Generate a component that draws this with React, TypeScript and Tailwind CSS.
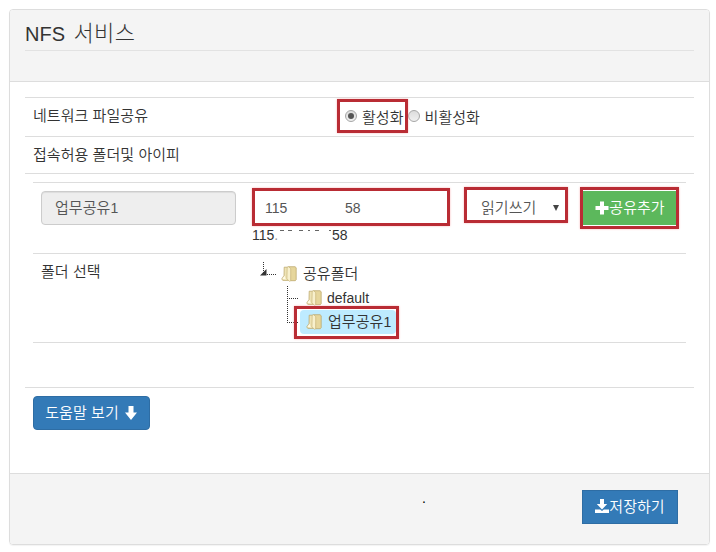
import React from 'react';

interface TextProps {
    children: React.ReactNode;
}

interface HighlightProps {
    className: string;
}

// Hangul runs a little larger than the latin text around it
const Ko: React.FC<TextProps> = ({ children }) => (
    <span className="text-[15px] leading-5 tracking-[0.05px]">{children}</span>
);

const Highlight: React.FC<HighlightProps> = ({ className }) => (
    <span className={`absolute border-[3px] border-[#b92c34] shadow-[0_0_2px_#f7b5b8] pointer-events-none ${className}`} />
);

const FolderIcon: React.FC = () => (
    <svg className="w-4 h-4 shrink-0" viewBox="0 0 16 16" fill="none">
        <path d="M3.2 1.2h4.3v13.2H2L.7 13.2 3 9.5z" fill="#eee3b5" stroke="#b7a263" strokeWidth=".7" />
        <path d="M1.3 12.8 3.6 9.8l1.2 3.6z" fill="#fffbe6" />
        <path d="M7.6.7H14l1.2 1v12l-.9 1H9.4z" fill="#e6d69c" stroke="#b7a263" strokeWidth=".7" />
        <path d="M6.2 1.2 7.6.7 9.7 2.6v12.2l-1.2.5-2.6-2.4z" fill="#f8f0cc" stroke="#c2ae70" strokeWidth=".6" />
    </svg>
);

const PlusIcon: React.FC = () => (
    <svg className="w-3.5 h-3.5 shrink-0" viewBox="0 0 14 14" fill="currentColor">
        <path d="M5 .5h4V5h4.5v4H9v4.5H5V9H.5V5H5z" />
    </svg>
);

const ArrowDownIcon: React.FC = () => (
    <svg className="w-3.5 h-3.5 shrink-0" viewBox="0 0 14 14" fill="currentColor">
        <path d="M4.5 0h5v6.5H13L7 14 1 6.5h3.5z" />
    </svg>
);

const SaveIcon: React.FC = () => (
    <svg className="w-3.5 h-3.5 -mt-0.5 shrink-0" viewBox="0 0 14 14" fill="currentColor">
        <path d="M5 0h4v5h3.2L7 10.6 1.8 5H5z" />
        <path d="M0 10.5h5.2L7 12l1.8-1.5H14V14H0z" />
    </svg>
);

const Radio: React.FC<{ checked?: boolean }> = ({ checked }) => (
    <span className="flex items-center justify-center w-3 h-3 -mt-1 rounded-full border border-[#a6a6a6] bg-linear-to-b from-[#dcdcdc] to-[#f0f0f0]">
        {checked && <span className="w-1.5 h-1.5 rounded-full bg-[#555]" />}
    </span>
);

const App: React.FC = () => {
    return (
        <div className="h-[552px] bg-white pt-[9px] pl-[9px] font-['Liberation_Sans','Noto_Sans_CJK_KR',sans-serif] text-sm leading-5 font-[350] text-[#333]">
            <div className="w-[701px] h-[536px] flex flex-col border border-[#ddd] rounded shadow-[0_1px_1px_rgba(0,0,0,0.05)] overflow-hidden">
                <header className="h-[72px] shrink-0 px-[15px] bg-[#f4f4f4] border-b border-[#ddd]">
                    <h1 className="h-[41px] pt-[9px] text-xl leading-[30px] font-light border-b border-[#e2e2e2]">
                        NFS <span className="text-[22px] ml-[3px] tracking-[0.3px]">서비스</span>
                    </h1>
                </header>

                <main className="flex-grow px-[15px] pt-[15px]">
                    <div className="h-[39px] flex border-t border-[#ddd] pl-2 pt-2">
                        <div className="w-[312px]"><Ko>네트워크 파일공유</Ko></div>
                        <div className="relative flex items-start">
                            <Highlight className="-left-2 -top-[7px] w-[71px] h-[34px]" />
                            <label className="flex items-center gap-[5px] pt-0.5">
                                <Radio checked />
                                <Ko>활성화</Ko>
                            </label>
                            <label className="flex items-center gap-[5px] pt-0.5 ml-1">
                                <Radio />
                                <Ko>비활성화</Ko>
                            </label>
                        </div>
                    </div>

                    <div className="h-[37px] border-t border-[#ddd] pl-2 pt-2">
                        <Ko>접속허용 폴더및 아이피</Ko>
                    </div>

                    <div className="h-[214px] border-t border-[#ddd] px-2 pt-2">
                        <div className="h-[71px] flex items-start border-t border-[#ddd] pl-2 pt-2">
                            <div className="w-[195px] h-[34px] flex items-center px-[13px] rounded border border-[#ccc] bg-[#eee] text-[#555] shadow-[inset_0_1px_1px_rgba(0,0,0,0.075)]">
                                <Ko>업무공유</Ko>1
                            </div>
                            <div className="ml-[17px] w-[195px]">
                                <div className="relative h-[34px] flex items-center pl-3 text-[#555]">
                                    <Highlight className="-left-px -top-[3px] w-[198px] h-[38px]" />
                                    <span className="w-20">115</span>
                                    <span>58</span>
                                </div>
                                <div className="flex -ml-px">
                                    <span className="w-[28px]">115<span className="text-[#999]">.</span></span>
                                    <span className="flex w-[52px] pt-[5px]">
                                        <span className="w-1 h-px bg-[#666]" />
                                        <span className="w-1 h-px bg-[#666] ml-1" />
                                        <span className="w-1 h-px bg-[#666] ml-[7px]" />
                                        <span className="w-0.5 h-px bg-[#666] ml-[5px]" />
                                        <span className="w-1 h-px bg-[#666] ml-[5px]" />
                                        <span className="w-0.5 h-px bg-[#666] ml-2.5" />
                                    </span>
                                    <span>58</span>
                                </div>
                            </div>
                            <div className="relative ml-[17px] w-[102px] h-[34px] flex items-center justify-between pl-4 pr-2 text-[#555]">
                                <Highlight className="-left-px -top-1 w-[104px] h-9" />
                                <Ko>읽기쓰기</Ko>
                                <svg className="w-1.5 h-1.5" viewBox="0 0 6 6" fill="#444"><path d="M0 0h6L3 6z" /></svg>
                            </div>
                            <button className="relative ml-4 w-[94px] h-[34px] flex items-center justify-center bg-[#5cb85c] text-white">
                                <Highlight className="-left-[3px] -top-1 w-[99px] h-[42px]" />
                                <PlusIcon />
                                <Ko>공유추가</Ko>
                            </button>
                        </div>

                        <div className="h-[90px] flex border-y border-[#ddd] pl-2">
                            <div className="w-[219px] pt-2"><Ko>폴더 선택</Ko></div>
                            <div className="pt-2">
                                <div className="h-6 flex items-center">
                                    <svg className="w-4 h-6 mr-[5px]" viewBox="0 0 16 24" fill="none">
                                        <path d="M3.5 0v13M7 12.5h9" stroke="#333" strokeDasharray="1 1" />
                                        <path d="M6.5 7v6.5H0z" fill="#333" />
                                    </svg>
                                    <FolderIcon />
                                    <span className="ml-[6px]"><Ko>공유폴더</Ko></span>
                                </div>
                                <div className="flex pl-[27px]">
                                    <svg className="w-3 h-12" viewBox="0 0 12 48" fill="none">
                                        <path d="M.5 0v36M0 12.5h12M0 36.5h12" stroke="#333" strokeDasharray="1 1" />
                                    </svg>
                                    <div>
                                        <div className="h-6 flex items-center pl-[7px]">
                                            <FolderIcon />
                                            <span className="ml-[5px]">default</span>
                                        </div>
                                        <div className="relative h-6 w-24 flex items-center pl-[6px] ml-px bg-[#beebff] rounded-sm">
                                            <Highlight className="-left-[6px] -top-1 w-[105px] h-[33px]" />
                                            <FolderIcon />
                                            <span className="ml-[6px] whitespace-nowrap"><Ko>업무공유</Ko>1</span>
                                        </div>
                                    </div>
                                </div>
                            </div>
                        </div>
                    </div>

                    <div className="border-t border-[#ddd] pl-2 pt-2">
                        <button className="w-[117px] h-[34px] flex items-center justify-center gap-[5px] rounded border border-[#2e6da4] bg-[#337ab7] text-white">
                            <Ko>도움말 보기</Ko>
                            <ArrowDownIcon />
                        </button>
                    </div>
                </main>

                <footer className="h-[71px] shrink-0 flex items-start justify-end pt-4 pr-[31px] bg-[#f4f4f4] border-t border-[#ddd]">
                    <span className="w-[160px] -mt-0.5 text-black">.</span>
                    <button className="w-24 h-[34px] flex items-center justify-center border border-[#2e6da4] bg-[#337ab7] text-white">
                        <SaveIcon />
                        <Ko>저장하기</Ko>
                    </button>
                </footer>
            </div>
        </div>
    );
};

export default App;
